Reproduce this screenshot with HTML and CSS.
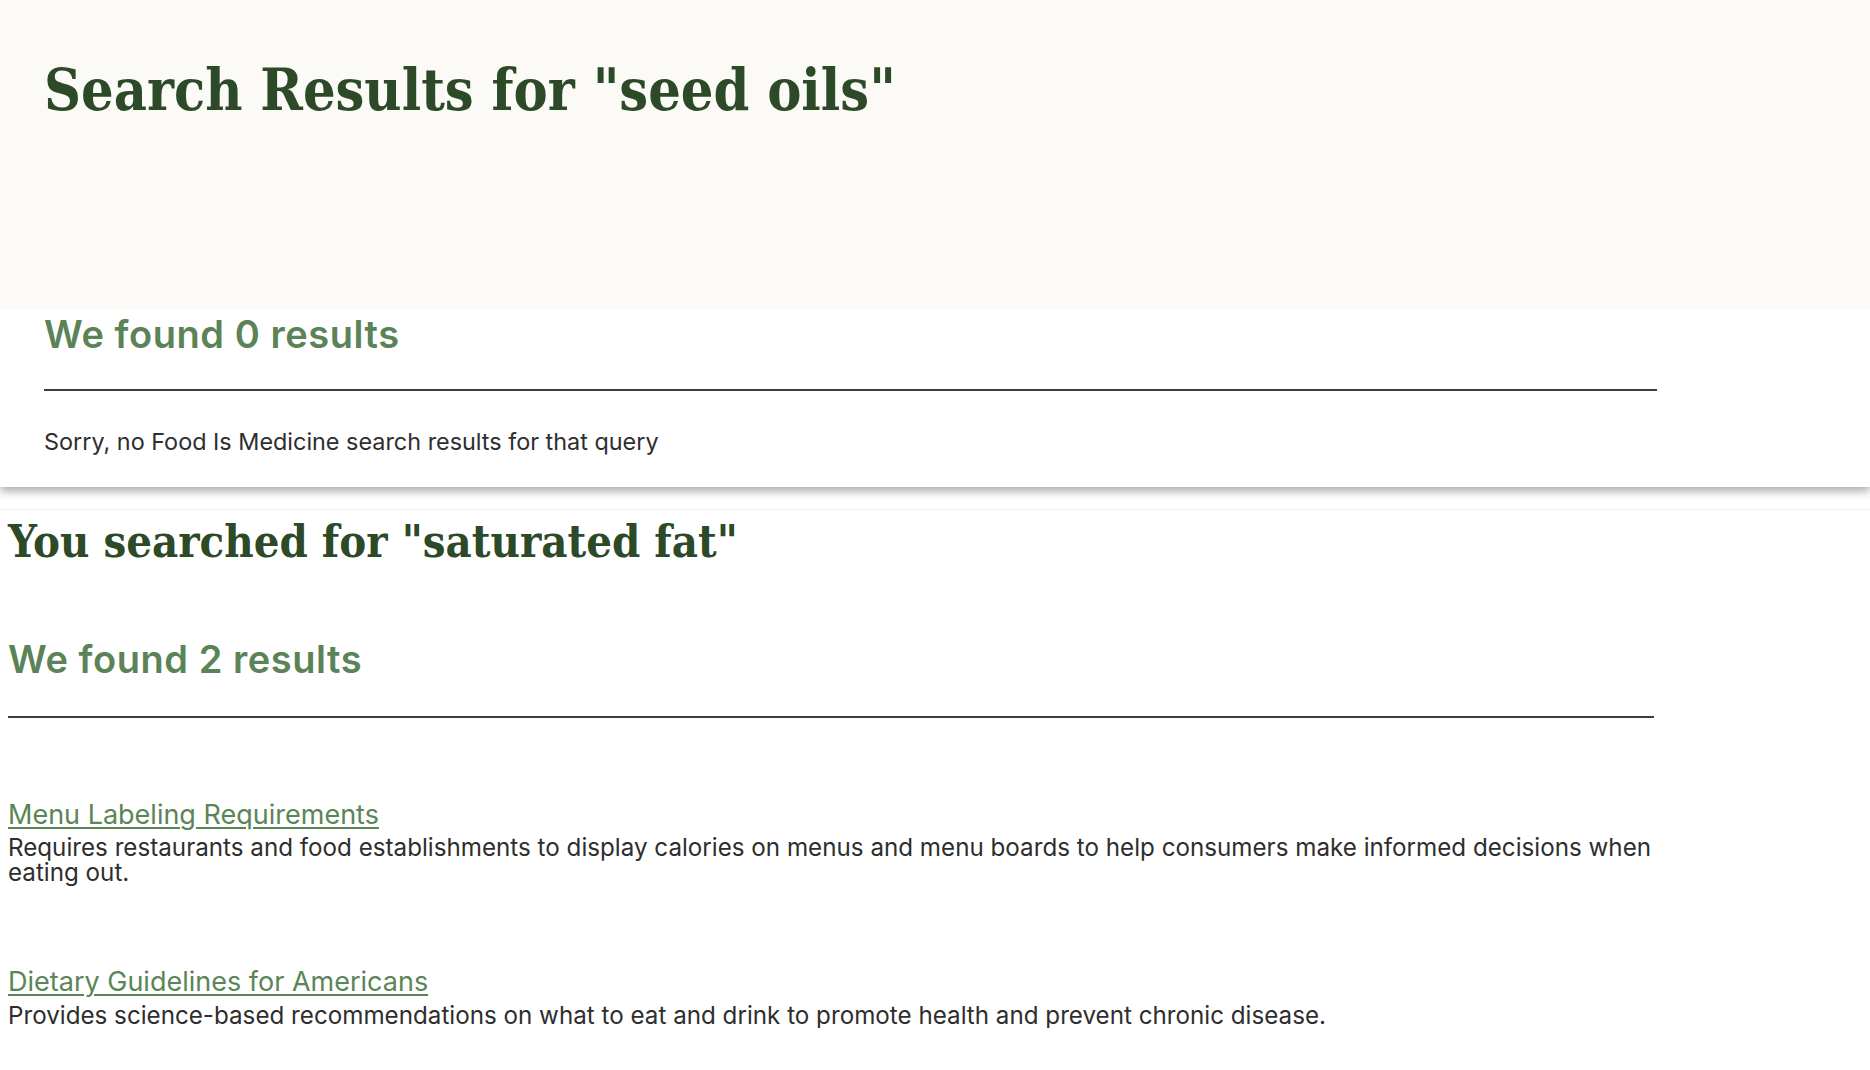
FILE: index.html
```html
<!DOCTYPE html>
<html lang="en">
<head>
<meta charset="utf-8">
<title>Search Results</title>
<link rel="stylesheet" href="styles.css">
</head>
<body>
<div class="panel">
  <header class="hero">
    <h1 class="hero-title">Search Results for "seed oils"</h1>
  </header>
  <div class="panel-body">
    <h2 class="count">We found 0 results</h2>
    <hr class="rule rule-first">
    <p class="empty">Sorry, no Food Is Medicine search results for that query</p>
  </div>
</div>
<main class="results">
  <div class="results-inner">
    <h1 class="results-title">You searched for "saturated fat"</h1>
    <h2 class="count count-second">We found 2 results</h2>
    <hr class="rule rule-second">
    <ul class="result-list">
      <li class="result">
        <h3 class="result-head"><a class="result-link" href="#">Menu Labeling Requirements</a></h3>
        <p class="result-desc">Requires restaurants and food establishments to display calories on menus and menu boards to help consumers make informed decisions when eating out.</p>
      </li>
      <li class="result">
        <h3 class="result-head"><a class="result-link" href="#">Dietary Guidelines for Americans</a></h3>
        <p class="result-desc">Provides science-based recommendations on what to eat and drink to promote health and prevent chronic disease.</p>
      </li>
    </ul>
  </div>
</main>
</body>
</html>
```
FILE: styles.css
```css
* { box-sizing: border-box; }
body {
  margin: 0;
  font-family: "Inter", "Liberation Sans", sans-serif;
  color: #2e2e2e;
  background: #fff;
}
.panel {
  background: #fff;
  box-shadow: 0 4px 9px rgba(0, 0, 0, 0.35);
  padding-bottom: 31px;
}
.hero {
  background: #fbfaf7;
  height: 310px;
  padding: 56px 44px 0;
}
.hero-title {
  margin: 0;
  font-family: "DejaVu Serif Condensed", "DejaVu Serif", serif;
  font-weight: 700;
  font-size: 57px;
  line-height: 68px;
  color: #2d4a28;
}
.panel-body { padding: 1px 44px 0; }
.count {
  margin: 0;
  font-size: 38px;
  font-weight: 600;
  letter-spacing: 0.55px;
  line-height: 46px;
  color: #5b8357;
}
.rule {
  border: 0;
  border-top: 2px solid #3c3c3c;
  margin: 32px 0 0;
}
.rule-first { width: 1613px; }
.rule-second { width: 1646px; margin-top: 34px; }
.empty {
  margin: 36.5px 0 0;
  font-size: 23.4px;
  line-height: 28px;
}
.results {
  margin-top: 22px;
  border-top: 1px solid #f0efea;
  padding: 0 8px;
}
.results-inner { max-width: 1660px; }
.results-title {
  margin: 5.4px 0 0;
  font-family: "DejaVu Serif Condensed", "DejaVu Serif", serif;
  font-weight: 700;
  font-size: 45px;
  line-height: 54px;
  color: #2d4a28;
}
.count-second { margin-top: 67px; }
.result-list { list-style: none; margin: 0; padding: 0; }
.result { margin-top: 81px; }
.result-head {
  margin: 0;
  font-size: 27px;
  font-weight: 400;
  line-height: 32px;
}
.result-link {
  color: #5a8556;
  text-decoration: underline;
  text-underline-offset: 3px;
  text-decoration-thickness: 1.5px;
}
.result-desc {
  margin: 4.6px 0 0;
  font-size: 24.2px;
  line-height: 25px;
}
```
